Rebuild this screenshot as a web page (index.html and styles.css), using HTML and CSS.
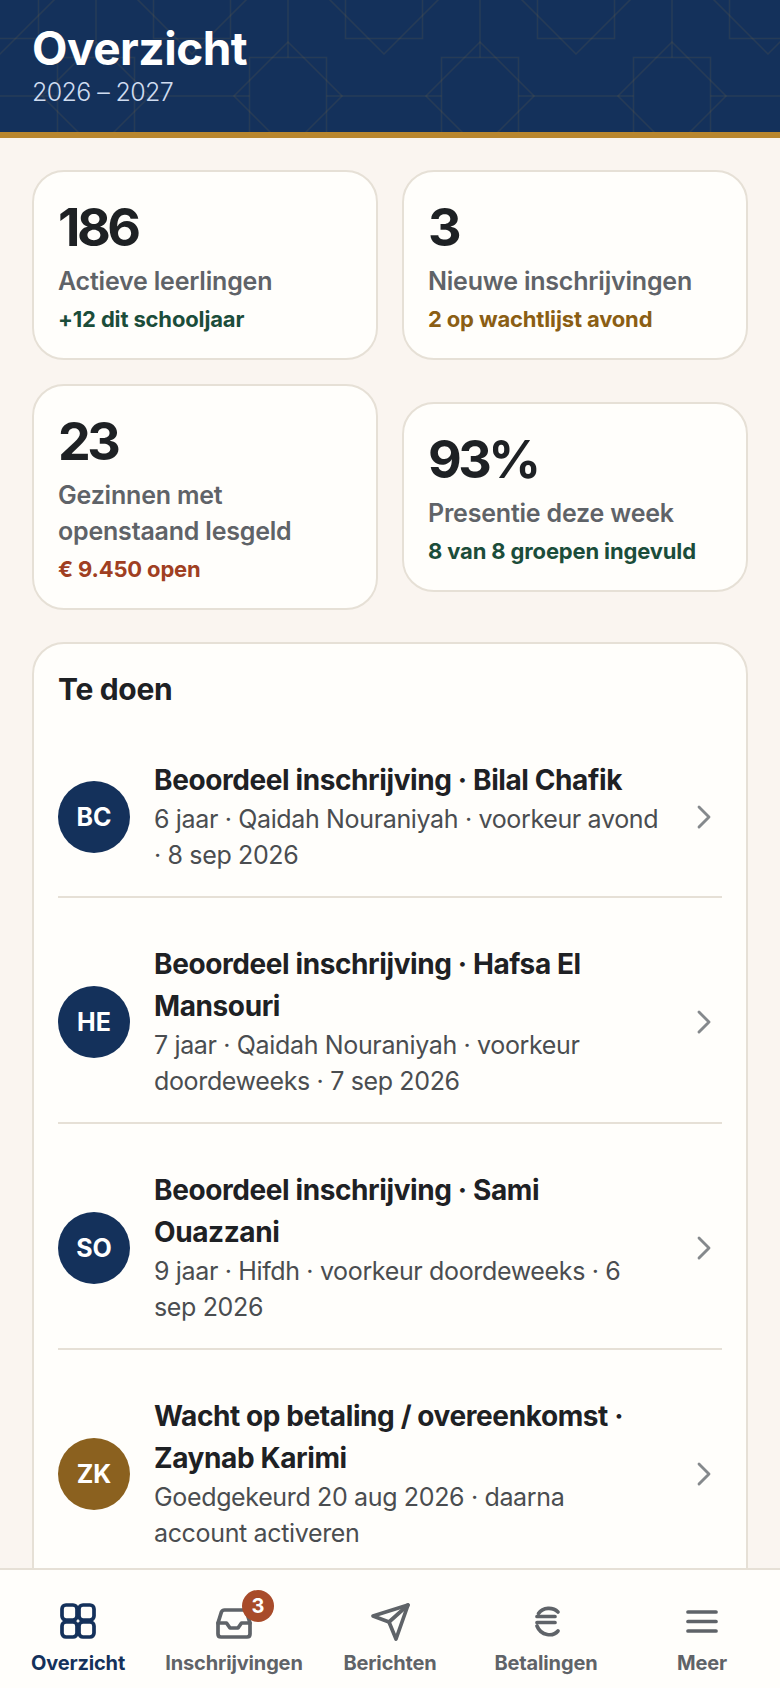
FILE: index.html
```html
<!DOCTYPE html>
<html lang="nl">
<head>
    <meta charset="UTF-8">
    <meta name="viewport" content="width=device-width, initial-scale=1.0">
    <title>Overzicht</title>
    <link rel="stylesheet" href="styles.css">
</head>
<body>
    <div class="app">
        <header class="topbar">
            <svg class="topbar-pattern" width="100%" height="100%" aria-hidden="true">
                <defs>
                    <pattern id="tiles" width="192" height="192" patternUnits="userSpaceOnUse">
                        <g fill="none" stroke="#b8862e" stroke-opacity="0.11" stroke-width="1.5">
                            <rect x="57.5" y="57.5" width="77" height="77"/>
                            <path d="M96 42 150 96 96 150 42 96Z"/>
                            <path d="M96 0V57.5M96 134.5V192M0 96H57.5M134.5 96H192"/>
                            <rect x="-38.5" y="-38.5" width="77" height="77"/>
                            <rect x="153.5" y="-38.5" width="77" height="77"/>
                            <rect x="-38.5" y="153.5" width="77" height="77"/>
                            <rect x="153.5" y="153.5" width="77" height="77"/>
                            <path d="M0 -54 54 0 0 54 -54 0Z"/>
                            <path d="M192 -54 246 0 192 54 138 0Z"/>
                        </g>
                    </pattern>
                </defs>
                <rect width="100%" height="100%" fill="url(#tiles)"/>
            </svg>
            <h1>Overzicht</h1>
            <p class="topbar-sub">2026 – 2027</p>
        </header>

        <main class="content">
            <section class="stats">
                <div class="stat">
                    <div class="stat-num">186</div>
                    <div class="stat-label">Actieve leerlingen</div>
                    <div class="stat-note green">+12 dit schooljaar</div>
                </div>
                <div class="stat">
                    <div class="stat-num">3</div>
                    <div class="stat-label">Nieuwe inschrijvingen</div>
                    <div class="stat-note amber">2 op wachtlijst avond</div>
                </div>
                <div class="stat">
                    <div class="stat-num">23</div>
                    <div class="stat-label">Gezinnen met openstaand lesgeld</div>
                    <div class="stat-note red">€ 9.450 open</div>
                </div>
                <div class="stat">
                    <div class="stat-num">93%</div>
                    <div class="stat-label">Presentie deze week</div>
                    <div class="stat-note green">8 van 8 groepen ingevuld</div>
                </div>
            </section>

            <section class="todo">
                <h2>Te doen</h2>

                <div class="todo-row">
                    <div class="avatar">BC</div>
                    <div class="todo-text">
                        <div class="todo-title">Beoordeel inschrijving · Bilal Chafik</div>
                        <div class="todo-sub">6 jaar · Qaidah Nouraniyah · voorkeur avond · 8 sep 2026</div>
                    </div>
                    <svg class="chevron" viewBox="0 0 24 24"><path d="M9 6l6 6-6 6"/></svg>
                </div>

                <div class="todo-row">
                    <div class="avatar">HE</div>
                    <div class="todo-text">
                        <div class="todo-title">Beoordeel inschrijving · Hafsa El Mansouri</div>
                        <div class="todo-sub">7 jaar · Qaidah Nouraniyah · voorkeur doordeweeks · 7 sep 2026</div>
                    </div>
                    <svg class="chevron" viewBox="0 0 24 24"><path d="M9 6l6 6-6 6"/></svg>
                </div>

                <div class="todo-row">
                    <div class="avatar">SO</div>
                    <div class="todo-text">
                        <div class="todo-title">Beoordeel inschrijving · Sami Ouazzani</div>
                        <div class="todo-sub">9 jaar · Hifdh · voorkeur doordeweeks · 6 sep 2026</div>
                    </div>
                    <svg class="chevron" viewBox="0 0 24 24"><path d="M9 6l6 6-6 6"/></svg>
                </div>

                <div class="todo-row">
                    <div class="avatar avatar-gold">ZK</div>
                    <div class="todo-text">
                        <div class="todo-title">Wacht op betaling / overeenkomst · Zaynab Karimi</div>
                        <div class="todo-sub">Goedgekeurd 20 aug 2026 · daarna account activeren</div>
                    </div>
                    <svg class="chevron" viewBox="0 0 24 24"><path d="M9 6l6 6-6 6"/></svg>
                </div>
            </section>
        </main>

        <nav class="tabbar">
            <div class="tab active">
                <svg class="tab-icon" viewBox="0 0 44 44">
                    <rect x="6" y="6" width="15" height="15" rx="4"/>
                    <rect x="23" y="6" width="15" height="15" rx="4"/>
                    <rect x="6" y="23" width="15" height="15" rx="4"/>
                    <rect x="23" y="23" width="15" height="15" rx="4"/>
                </svg>
                <span>Overzicht</span>
            </div>
            <div class="tab">
                <span class="badge">3</span>
                <svg class="tab-icon" viewBox="0 0 44 44">
                    <path d="M6 24H14.500L18 29H26L29.500 24H38"/>
                    <path d="M12.500 11H31.500C33 11 34 11.800 34.600 13L38 24V35C38 37 37 38 35 38H9C7 38 6 37 6 35V24L9.400 13C10 11.800 11 11 12.500 11Z"/>
                </svg>
                <span>Inschrijvingen</span>
            </div>
            <div class="tab">
                <svg class="tab-icon" viewBox="0 0 44 44">
                    <path d="M40 6 5 17 21 23 28 40Z"/>
                    <path d="M40 6 21 23"/>
                </svg>
                <span>Berichten</span>
            </div>
            <div class="tab">
                <svg class="tab-icon" viewBox="0 0 44 44">
                    <path d="M34 13C29 8 19 8 14.500 14.500"/>
                    <path d="M13 17.500H31M13 23.500H31"/>
                    <path d="M13 27C17 37 29 38 34 32"/>
                </svg>
                <span>Betalingen</span>
            </div>
            <div class="tab">
                <svg class="tab-icon" viewBox="0 0 44 44">
                    <path d="M8 13H36M8 22.500H36M8 32H36"/>
                </svg>
                <span>Meer</span>
            </div>
        </nav>
    </div>
</body>
</html>
```

FILE: styles.css
```css
/* Page */
body {
    margin: 0;
    font-family: Inter, "Liberation Sans", sans-serif;
    color: #1e2124;
    background: #faf5f0;
}

.app {
    display: flex;
    flex-direction: column;
    height: 100vh;
    overflow: hidden;
}

/* Header */
.topbar {
    position: relative;
    flex: none;
    box-sizing: border-box;
    height: 138px;
    padding: 22px 32px 0;
    background: #14315b;
    border-bottom: 6px solid #b8862e;
    overflow: hidden;
}

.topbar-pattern {
    position: absolute;
    left: 0;
    top: 0;
}

.topbar h1 {
    position: relative;
    margin: 0;
    font-size: 46px;
    line-height: 52px;
    font-weight: 700;
    letter-spacing: -0.5px;
    color: #fff;
}

.topbar-sub {
    position: relative;
    margin: 2px 0 0;
    font-size: 25px;
    line-height: 32px;
    font-weight: 300;
    letter-spacing: -0.6px;
    color: #cfdcf0;
}

/* Scrolling content */
.content {
    flex: 1;
    min-height: 0;
    overflow: hidden;
    padding: 32px 32px 0;
}

/* Stat cards */
.stats {
    display: grid;
    grid-template-columns: 1fr 1fr;
    gap: 24px;
    align-items: center;
}

.stat {
    padding: 24px;
    background: #fffefb;
    border: 2px solid #e6e0d6;
    border-radius: 32px;
}

.stat-num {
    margin-bottom: 3px;
    font-size: 52px;
    line-height: 64px;
    font-weight: 700;
    letter-spacing: -3.5px;
}

.stat-label {
    font-size: 25px;
    line-height: 36px;
    font-weight: 600;
    letter-spacing: -0.2px;
    color: #5f6368;
}

.stat-note {
    margin-top: 5px;
    font-size: 22px;
    line-height: 30px;
    font-weight: 700;
    letter-spacing: -0.15px;
}

.green { color: #1b4d3a; }
.amber { color: #8b5e14; }
.red { color: #a03f22; }

/* Te doen */
.todo {
    margin-top: 32px;
    padding: 24px 24px 24px;
    background: #fffefb;
    border: 2px solid #e6e0d6;
    border-radius: 32px;
}

.todo h2 {
    margin: 0 0 5px;
    font-size: 30px;
    line-height: 42px;
    font-weight: 700;
    letter-spacing: -0.3px;
}

.todo-row {
    display: flex;
    align-items: center;
    gap: 24px;
    padding: 44px 0 23px;
    margin-bottom: 1px;
    border-bottom: 2px solid #e6e0d6;
}

.todo-row:last-child {
    border-bottom: none;
}

.avatar {
    flex: none;
    width: 72px;
    height: 72px;
    margin-top: 2px;
    border-radius: 50%;
    background: #14315b;
    color: #fff;
    font-size: 25px;
    font-weight: 700;
    display: flex;
    align-items: center;
    justify-content: center;
}

.avatar-gold {
    background: #8b611f;
}

.todo-text {
    flex: 1;
    min-width: 0;
}

.todo-title {
    font-size: 28px;
    line-height: 42px;
    font-weight: 700;
    letter-spacing: -0.4px;
}

.todo-sub {
    font-size: 25px;
    line-height: 36px;
    font-weight: 400;
    letter-spacing: -0.35px;
    color: #4a4d50;
}

.chevron {
    flex: none;
    width: 40px;
    height: 40px;
    margin: 2px -2px 0 0;
    fill: none;
    stroke: #85898c;
    stroke-width: 1.7;
    stroke-linecap: round;
    stroke-linejoin: round;
}

/* Bottom tabs */
.tabbar {
    flex: none;
    box-sizing: border-box;
    height: 120px;
    display: grid;
    grid-template-columns: repeat(5, 1fr);
    background: #fffefb;
    border-top: 2px solid #e6e0d6;
}

.tab {
    position: relative;
    display: flex;
    flex-direction: column;
    align-items: center;
    padding-top: 29px;
    color: #5f6368;
    font-size: 20px;
    line-height: 28px;
    font-weight: 700;
    letter-spacing: -0.15px;
}

.tab.active {
    color: #14315b;
}

.tab-icon {
    width: 44px;
    height: 44px;
    margin-bottom: 6px;
    fill: none;
    stroke: currentColor;
    stroke-width: 3.7;
    stroke-linecap: round;
    stroke-linejoin: round;
}

.badge {
    position: absolute;
    left: 86px;
    top: 20px;
    width: 32px;
    height: 32px;
    border-radius: 50%;
    background: #a84b2a;
    color: #fff;
    font-size: 20px;
    line-height: 32px;
    text-align: center;
}
```
